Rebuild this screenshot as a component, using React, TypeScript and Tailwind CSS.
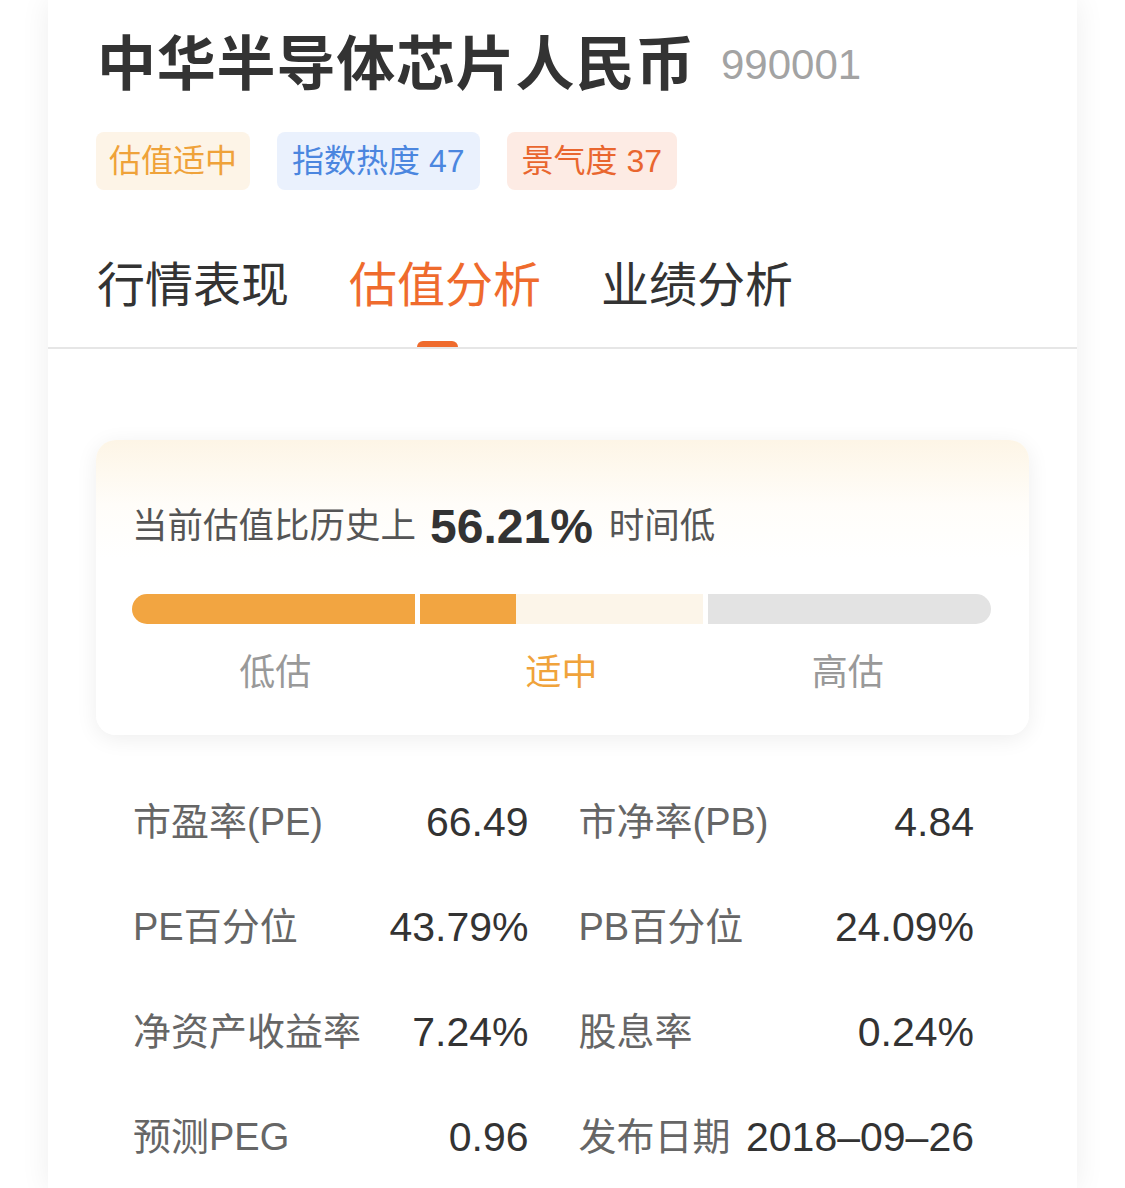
import React from 'react';

const font = { fontFamily: '"Liberation Sans", "Noto Sans CJK SC", sans-serif' };

type Metric = { label: string; value: string };

const metrics: Metric[] = [
  { label: '市盈率(PE)', value: '66.49' },
  { label: '市净率(PB)', value: '4.84' },
  { label: 'PE百分位', value: '43.79%' },
  { label: 'PB百分位', value: '24.09%' },
  { label: '净资产收益率', value: '7.24%' },
  { label: '股息率', value: '0.24%' },
  { label: '预测PEG', value: '0.96' },
  { label: '发布日期', value: '2018–09–26' },
];

const tabs = ['行情表现', '估值分析', '业绩分析'];

export default function App() {
  return (
    <div className="min-h-[1188px] w-full bg-white" style={font}>
      <div className="mx-[48px] min-h-[1188px] bg-white shadow-[0_0_28px_rgba(0,0,0,0.07)]">
        {/* Header */}
        <div className="px-[48px] pt-[30px]">
          <div className="flex items-center">
            <h1 className="ml-[1px] text-[59px] leading-[70px] font-bold tracking-[0.8px] text-[#333]">中华半导体芯片人民币</h1>
            <span className="ml-[26px] text-[42px] leading-[70px] text-[#a3a3a3]">990001</span>
          </div>

          {/* Tags */}
          <div className="mt-[32px] flex gap-[27px]">
            <span className="h-[58px] px-[13px] rounded-[8px] bg-[#fdf4e7] text-[#efa23a] text-[32px] leading-[58px]">估值适中</span>
            <span className="h-[58px] px-[15px] rounded-[8px] bg-[#eaf1fd] text-[#4b86df] text-[32px] leading-[58px]">指数热度 47</span>
            <span className="h-[58px] px-[15px] rounded-[8px] bg-[#fdebe4] text-[#e9662f] text-[32px] leading-[58px]">景气度 37</span>
          </div>

          {/* Tabs */}
          <div className="mt-[67px] flex gap-[60px] pl-[1px]">
            {tabs.map((t, i) => (
              <div key={t} className="flex flex-col items-center">
                <span className={`text-[48px] leading-[58px] ${i === 1 ? 'text-[#ef6b2d]' : 'text-[#333]'}`}>{t}</span>
                <span className={`mt-[26px] mr-[16px] h-[6px] w-[41px] rounded-t-full ${i === 1 ? 'bg-[#ef6b2d]' : 'bg-transparent'}`} />
              </div>
            ))}
          </div>
        </div>
        <div className="h-[2px] bg-[#e6e6e6]" />

        {/* Valuation card */}
        <div className="mx-[48px] mt-[91px] rounded-[20px] bg-[linear-gradient(180deg,#fdf5e6_0%,#fffdf9_22%,#ffffff_40%)] pl-[36px] pr-[38px] pt-[62px] pb-[40px] shadow-[0_4px_22px_rgba(0,0,0,0.07)]">
          <div className="flex items-center h-[50px] text-[#555]">
            <span className="text-[35.5px]">当前估值比历史上</span>
            <span className="ml-[14px] text-[48px] font-bold text-[#333]">56.21%</span>
            <span className="ml-[16px] text-[35.5px]">时间低</span>
          </div>

          <div className="mt-[42px] flex h-[30px] gap-[5px]">
            <div className="flex-1 rounded-l-full bg-[#f2a541]" />
            <div className="flex-1 bg-[#fcf5e9] flex">
              <div className="h-full bg-[#f2a541]" style={{ width: '34%' }} />
            </div>
            <div className="flex-1 rounded-r-full bg-[#e3e3e3]" />
          </div>

          <div className="mt-[27px] grid grid-cols-3 text-center text-[36px] leading-[44px]">
            <span className="text-[#999]">低估</span>
            <span className="text-[#f0a33b]">适中</span>
            <span className="text-[#999]">高估</span>
          </div>
        </div>

        {/* Metrics */}
        <div className="ml-[85px] mt-[35px] w-[841px] grid grid-cols-2 gap-x-[50px]">
          {metrics.map((m) => (
            <div key={m.label} className="flex h-[105px] items-center justify-between">
              <span className="text-[38px] text-[#666]">{m.label}</span>
              <span className="text-[41px] text-[#333]">{m.value}</span>
            </div>
          ))}
        </div>
      </div>
    </div>
  );
}
